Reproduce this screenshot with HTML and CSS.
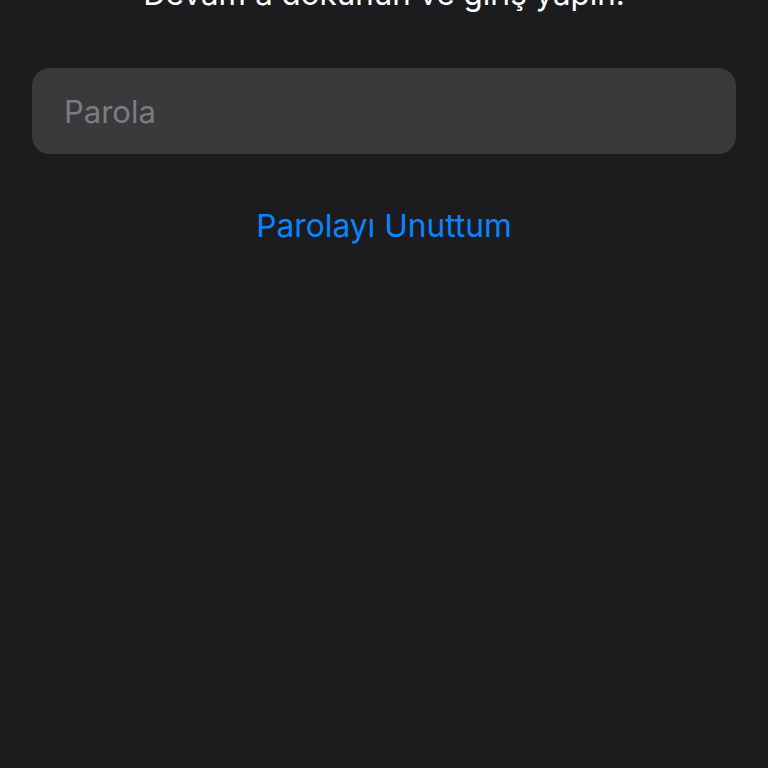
FILE: index.html
```
<!DOCTYPE html>
<html lang="tr">
<head>
<meta charset="utf-8">
<link rel="stylesheet" href="styles.css">
</head>
<body>
<div class="page">
  <p class="subtitle">Devam'a dokunun ve giriş yapın.</p>
  <div class="field"><span class="placeholder">Parola</span></div>
  <a class="link">Parolayı Unuttum</a>
</div>
</body>
</html>
```
FILE: styles.css
```
html, body { margin: 0; padding: 0; background: #1c1c1e; }
body { width: 768px; height: 768px; overflow: hidden; font-family: Inter, "Noto Sans", sans-serif; }
.page { display: flex; flex-direction: column; align-items: center; padding: 0 32px; }
.subtitle { margin: -24px 0 0 0; height: 36px; line-height: 36px; font-size: 31.3px; color: #ffffff; text-align: center; white-space: nowrap; }
.field { margin-top: 56px; align-self: stretch; height: 86px; background: #3a3a3c; border-radius: 18px; display: flex; align-items: center; padding: 0 32px; box-sizing: border-box; }
.placeholder { font-size: 31px; color: #7c7c80; }
.link { margin-top: 52px; font-size: 31.7px; color: #0a84ff; line-height: 40px; }
```
